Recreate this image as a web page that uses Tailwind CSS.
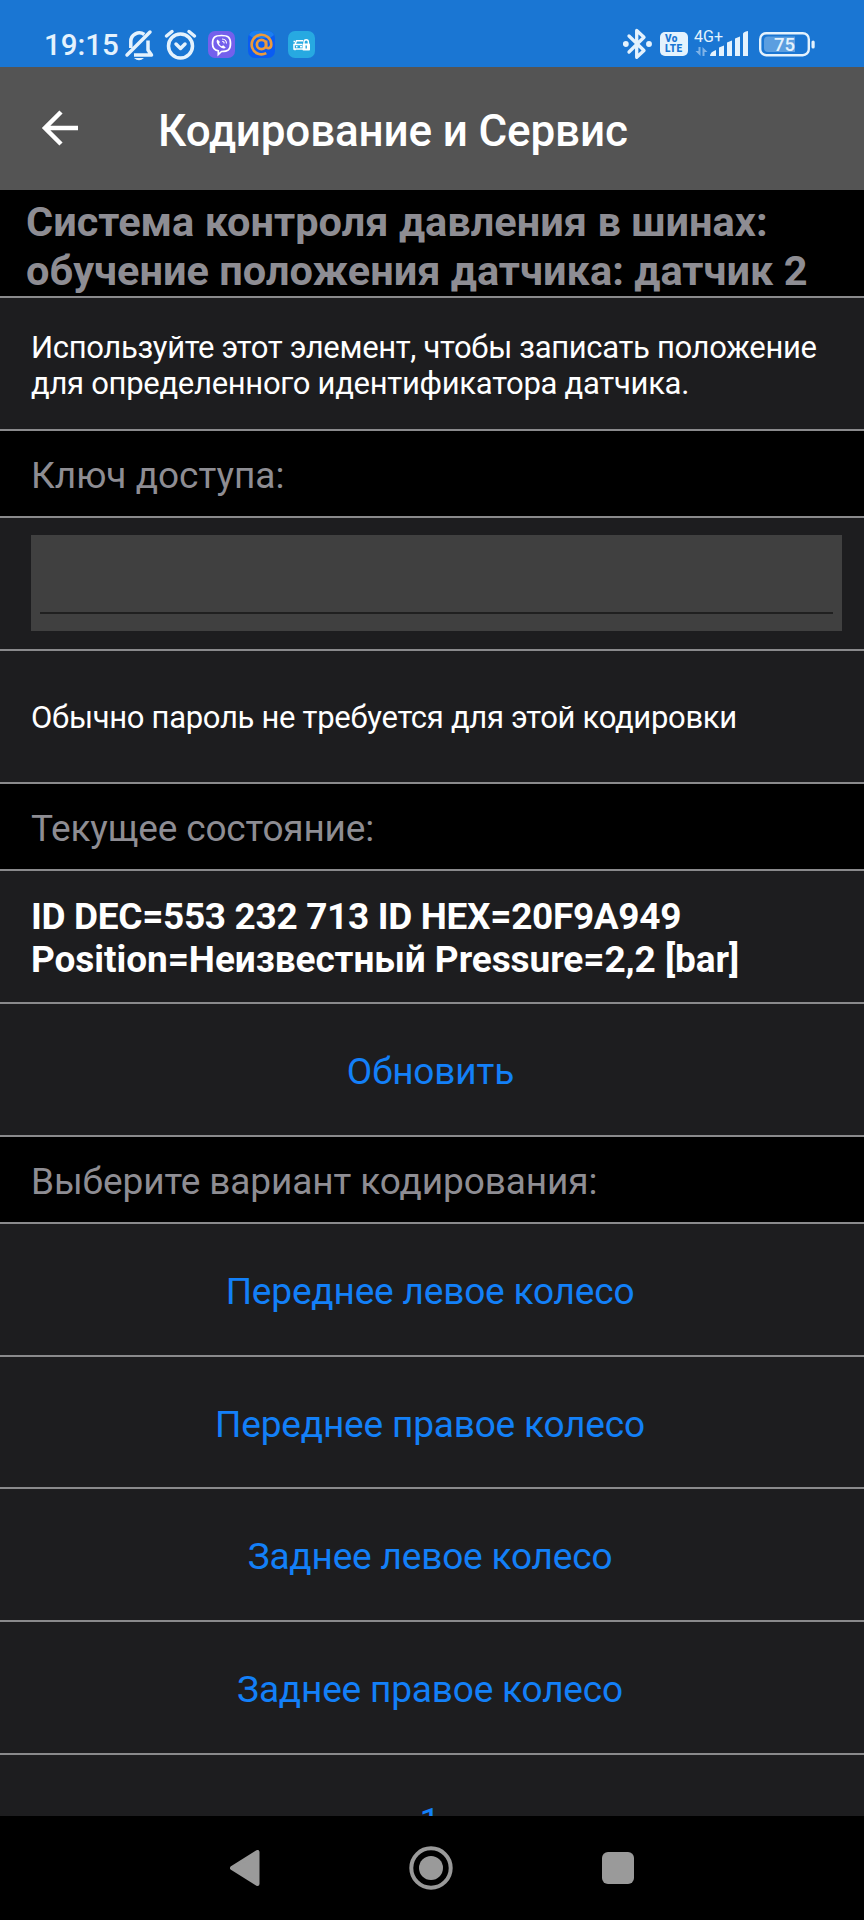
<!DOCTYPE html>
<html lang="ru">
<head>
<meta charset="utf-8">
<title>Кодирование и Сервис</title>
<script src="https://cdn.jsdelivr.net/npm/@tailwindcss/browser@4"></script>
</head>
<body class="bg-black">
<div class="flex h-[1920px] w-[864px] flex-col overflow-hidden bg-black font-[Roboto,sans-serif] text-white">

  <!-- Status bar -->
  <header class="flex h-[67px] shrink-0 bg-[#1a76d3] text-[#e4f2fd]">
    <div class="flex h-[67px] w-full items-start justify-between pt-[28px] pr-[49px] pl-[44px]">
      <div class="flex items-center">
        <span class="w-[80px] pt-px text-[29.5px] leading-8 font-medium">19:15</span>
        <svg class="mr-[10px] h-[32px] w-[30px]" viewBox="0 0 30 32" fill="none" stroke="currentColor" stroke-width="3.500">
          <path d="M6.800 19V12.500a8.500 8.500 0 0 1 13.500-7M24 11.500v9.500l3.500 5H10" stroke-linejoin="round"/><path d="M3 26L26 3" stroke-linecap="round"/>
          <path d="M10 29h10q-5 4.500-10 0z" fill="currentColor" stroke="none"/>
        </svg>
        <svg class="mr-[10px] h-[32px] w-[34px]" viewBox="0 0 34 32" fill="none" stroke="currentColor" stroke-width="3.500" stroke-linecap="round" stroke-linejoin="round">
          <circle cx="16.500" cy="17" r="12"/><path d="M12 15l4.500 4.500L21 15M2.500 7L8 2.500M30.500 7L25 2.500"/>
        </svg>
        <svg class="mr-[13px] size-[27px]" viewBox="0 0 27 27" fill="none">
          <rect width="27" height="27" rx="7" fill="#7460ec"/>
          <path d="M13.500 4.500c6.500 0 9 1.800 9 8s-2.500 8-9 8l-3.200 3v-3.600c-4-.8-5.800-3-5.800-7.400 0-6.200 2.500-8 9-8z" stroke="#fff" stroke-width="1.700"/>
          <path d="M9.500 8.500c-1.800 1.500-.5 4.500 2 6.800s5.200 3 6.200 1.200l-2.500-2.200-1.500.9c-1.500-.8-2.300-1.700-2.700-3l1-1.200z" fill="#fff"/>
          <path d="M14 8c3 .2 4.500 2 4.500 4.500M14.200 10.200c1.400.2 2 .9 2.100 2.200" stroke="#fff" stroke-width="1.100"/>
        </svg>
        <svg class="mr-[13px] size-[27px]" viewBox="0 0 27 27" fill="none">
          <rect width="27" height="27" rx="7" fill="#0a5cf2"/><path d="M1 4Q3 0 7 0h13q4 0 6 4l-4 3H5z" fill="#1b7ff0"/>
          <circle cx="13.500" cy="13.500" r="4.600" stroke="#eb9a3c" stroke-width="2.700"/>
          <path d="M18.100 9.500v5.300c0 3.800 5.200 3 5.200-1.300a9.800 9.800 0 1 0-5 8.600" stroke="#eb9a3c" stroke-width="2.700"/>
        </svg>
        <svg class="size-[27px]" viewBox="0 0 27 27" fill="none">
          <rect width="27" height="27" rx="7" fill="#27a9e1"/>
          <path d="M15 9.700H8.500L7 13.500h7M5.500 10.500h1.500M7 13.500H6v4.500h9M7 18v1.200M8 15.800h1.500M12 15.800h2" stroke="#fff" stroke-width="1.500"/>
          <rect x="14.500" y="12.500" width="7.500" height="7" rx=".8" fill="#fff"/><path d="M16 13v-2a2.200 2.200 0 0 1 4.400 0v2" stroke="#fff" stroke-width="1.400"/><path d="M18.200 14.500v3" stroke="#27a9e1" stroke-width="1.400"/>
        </svg>
      </div>
      <div class="flex items-center">
        <svg class="mr-[8px] h-[32px] w-[29px]" viewBox="0 0 29 32" fill="none" stroke="currentColor" stroke-width="3.300" stroke-linejoin="round" stroke-linecap="round">
          <path d="M6 8l15 14.500-7.300 6.800V2.500L21 9.300 6 24"/><circle cx="2.800" cy="16" r="1.300" fill="currentColor"/><circle cx="26" cy="16" r="1.300" fill="currentColor"/>
        </svg>
        <div class="mr-[6px] flex h-[24px] w-[28px] flex-col items-start justify-center rounded-[5px] bg-[#e4f2fd] pl-[5px] text-[10px] leading-[10px] font-black tracking-[0.4px] text-[#1a76d3]"><span>Vo</span><span>LTE</span></div>
        <svg class="mr-[10px] h-[32px] w-[55px]" viewBox="0 0 55 32" fill="currentColor">
          <text x="0" y="13.500" font-family="Roboto" font-size="16" textLength="29" lengthAdjust="spacingAndGlyphs">4G+</text>
          <g fill="#7fb3e8"><path d="M4.500 19h2v9l-5-5h3zM8.500 28v-9l5 5h-3v4z"/></g>
          <path d="M16 28q0-4 6-6v6zM25 19.500l5-2v10.500h-5zM33 14.500l5-2v15.500h-5zM41 10.500l5-2v19.500h-5zM49 6q0-2 5-3v25h-5z"/>
        </svg>
        <svg class="h-[32px] w-[56px]" viewBox="0 0 56 32" fill="none">
          <rect x="1.200" y="5.200" width="48.600" height="22" rx="6" stroke="currentColor" stroke-width="2.400"/>
          <path d="M9 8.500h27v15.500H9q-4 0-4-4v-7.500q0-4 4-4z" fill="#5b9ee0"/>
          <rect x="52.500" y="12.500" width="3.200" height="8" rx="1.600" fill="currentColor"/>
          <text x="15" y="23" font-family="Roboto" font-weight="500" font-size="18.500" fill="#e4f2fd">75</text>
        </svg>
      </div>
    </div>
  </header>

  <!-- App bar -->
  <div class="flex h-[123px] shrink-0 items-center bg-[#545454] pl-[41px]">
    <svg class="mt-[-2px] h-[36px] w-[39px]" viewBox="0 0 39 36" fill="none" stroke="#fff" stroke-width="4.500"><path d="M37 18H4M20 2L4 18l16 16"/></svg>
    <h1 class="mt-[5px] ml-[78px] text-[44px] leading-[50px] font-medium tracking-[-0.15px]">Кодирование и Сервис</h1>
  </div>

  <main class="flex h-[1626px] shrink-0 flex-col overflow-hidden bg-[#1d1d1f]">
    <h2 class="flex h-[108px] shrink-0 flex-col border-b-2 border-[#8a8a8c] bg-black pt-[7px] pl-[26px] text-[41.5px] leading-[49px] font-bold tracking-[0.02px] whitespace-nowrap text-[#8e8d93]"><span>Система контроля давления в шинах:</span><span>обучение положения датчика: датчик 2</span></h2>
    <p class="flex h-[133px] shrink-0 flex-col justify-center border-b-2 border-[#8a8a8c] pt-[4px] pl-[31px] text-[31px] leading-[36px] tracking-[-0.33px] whitespace-nowrap"><span>Используйте этот элемент, чтобы записать положение</span><span class="tracking-[-0.29px]">для определенного идентификатора датчика.</span></p>
    <h3 class="flex h-[87px] shrink-0 items-center border-b-2 border-[#8a8a8c] bg-black pt-[4px] pl-[31px] text-[37px] leading-[43px] text-[#8e8d93]">Ключ доступа:</h3>
    <div class="flex h-[133px] shrink-0 flex-col border-b-2 border-[#8a8a8c] pt-[17px] pl-[31px]">
      <div class="flex h-[96px] w-[811px] flex-col justify-end bg-[#404040] px-[9px] pb-[17px]"><div class="h-[2px] bg-[#202020]"></div></div>
    </div>
    <p class="flex h-[133px] shrink-0 items-center border-b-2 border-[#8a8a8c] pt-[3px] pl-[31px] text-[31px] leading-[36px] tracking-[-0.3px] whitespace-nowrap">Обычно пароль не требуется для этой кодировки</p>
    <h3 class="flex h-[87px] shrink-0 items-center border-b-2 border-[#8a8a8c] bg-black pt-[3px] pl-[31px] text-[37px] leading-[43px] tracking-[-0.18px] text-[#8e8d93]">Текущее состояние:</h3>
    <p class="flex h-[133px] shrink-0 flex-col justify-center border-b-2 border-[#8a8a8c] pt-[3px] pl-[31px] text-[37px] leading-[43px] font-bold whitespace-nowrap"><span class="tracking-[-0.33px]">ID DEC=553 232 713 ID HEX=20F9A949</span><span class="tracking-[-0.07px]">Position=Неизвестный Pressure=2,2 [bar]</span></p>
    <button class="flex h-[133px] shrink-0 items-center justify-center border-b-2 border-[#8a8a8c] pt-[4px] pr-[3px] text-[37px] leading-[43px] tracking-[-0.15px] text-[#1380f8]">Обновить</button>
    <h3 class="flex h-[87px] shrink-0 items-center border-b-2 border-[#8a8a8c] bg-black pt-[3px] pl-[31px] text-[37px] leading-[43px] tracking-[-0.1px] text-[#8e8d93]">Выберите вариант кодирования:</h3>
    <button class="flex h-[133px] shrink-0 items-center justify-center border-b-2 border-[#8a8a8c] pt-[4px] pr-[4px] text-[37px] leading-[43px] tracking-[-0.18px] text-[#1380f8]">Переднее левое колесо</button>
    <button class="flex h-[132px] shrink-0 items-center justify-center border-b-2 border-[#8a8a8c] pt-[4px] pr-[4px] text-[37px] leading-[43px] tracking-[-0.18px] text-[#1380f8]">Переднее правое колесо</button>
    <button class="flex h-[133px] shrink-0 items-center justify-center border-b-2 border-[#8a8a8c] pt-[4px] pr-[4px] text-[37px] leading-[43px] tracking-[-0.18px] text-[#1380f8]">Заднее левое колесо</button>
    <button class="flex h-[133px] shrink-0 items-center justify-center border-b-2 border-[#8a8a8c] pt-[4px] pr-[4px] text-[37px] leading-[43px] tracking-[-0.18px] text-[#1380f8]">Заднее правое колесо</button>
    <button class="flex h-[133px] shrink-0 items-center justify-center pr-[4px] text-[37px] leading-[43px] text-[#1380f8]">1</button>
  </main>

  <!-- System navigation -->
  <nav class="flex h-[104px] shrink-0 items-center pl-[230px]">
    <svg class="h-[36px] w-[30px]" viewBox="0 0 30 36"><path d="M27.500 2v32L2 18z" fill="#9a9a9a" stroke="#9a9a9a" stroke-width="4" stroke-linejoin="round"/></svg>
    <svg class="ml-[149px] size-[44px]" viewBox="0 0 44 44"><circle cx="22" cy="22" r="19.700" fill="none" stroke="#9a9a9a" stroke-width="4"/><circle cx="22" cy="22" r="12" fill="#9a9a9a"/></svg>
    <div class="ml-[149px] size-[32px] rounded-[6px] bg-[#9a9a9a]"></div>
  </nav>
</div>
</body>
</html>
